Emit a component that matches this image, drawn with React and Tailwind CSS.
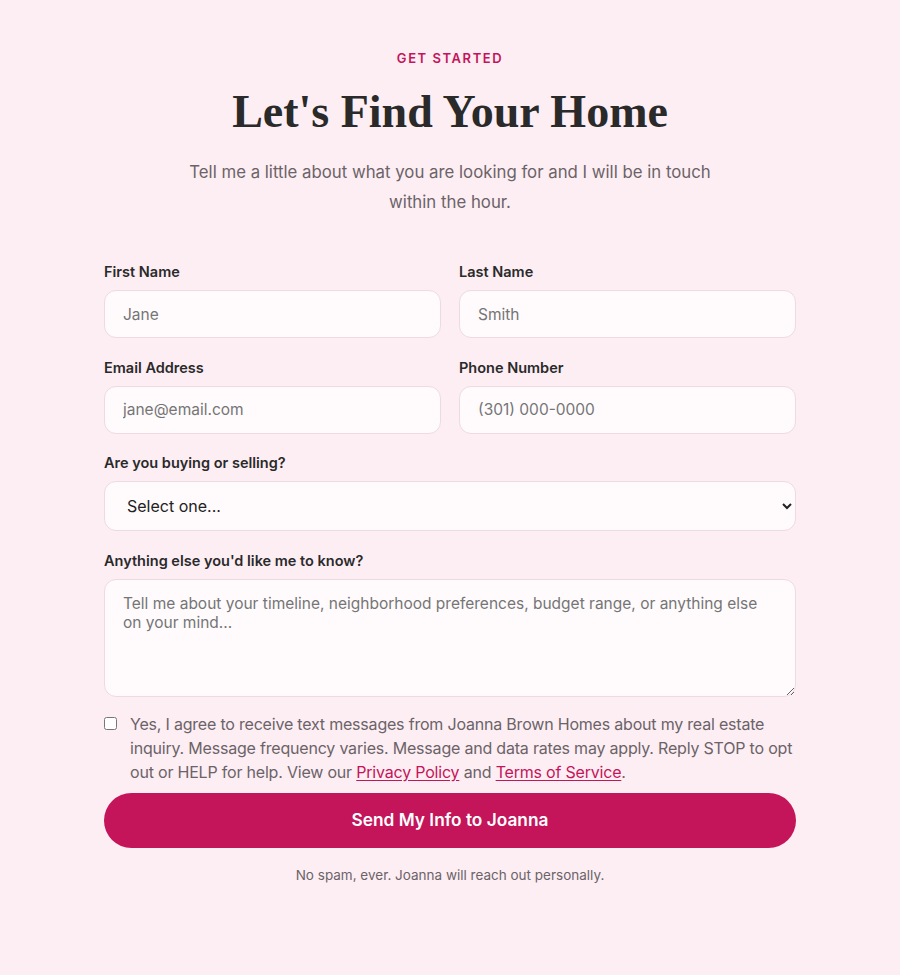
import { useState } from "react";

const inputClass =
  "w-full h-12 px-[18px] rounded-xl border-[1.5px] border-[#eedadf] bg-[#fffbfd] text-[15.5px] text-[#2a2a2a] placeholder:text-[#757575] focus:outline-none focus:border-[#c4145a]";

const Field = ({ label, children }) => (
  <div className="flex flex-col">
    <label className="text-[14.5px] font-semibold text-[#2a2a2a] mb-2 leading-5">{label}</label>
    {children}
  </div>
);

const App = () => {
  const [agree, setAgree] = useState(false);

  return (
    <div
      className="min-h-screen bg-[#fdeef4] pt-12 pb-20"
      style={{ fontFamily: "Inter, 'Noto Sans', sans-serif" }}
    >
      <div className="w-[692px] mx-auto">
        {/* Header */}
        <div className="text-center">
          <p className="text-[13px] font-semibold tracking-[0.12em] text-[#c4145a] leading-5">
            GET STARTED
          </p>
          <h1
            className="mt-[14px] text-[46px] font-bold text-[#2a2a2a] leading-[60px]"
            style={{ fontFamily: "'Liberation Serif', 'DejaVu Serif', serif" }}
          >
            Let's Find Your Home
          </h1>
          <p className="mt-[15px] mx-auto max-w-[540px] text-[16.8px] leading-[30px] text-[#6b6367]">
            Tell me a little about what you are looking for and I will be in touch within the hour.
          </p>
        </div>

        {/* Form */}
        <form className="mt-[45px] flex flex-col gap-[19.5px]" onSubmit={(e) => e.preventDefault()}>
          <div className="grid grid-cols-2 gap-[18px]">
            <Field label="First Name">
              <input type="text" placeholder="Jane" className={inputClass} />
            </Field>
            <Field label="Last Name">
              <input type="text" placeholder="Smith" className={inputClass} />
            </Field>
          </div>
          <div className="grid grid-cols-2 gap-[18px]">
            <Field label="Email Address">
              <input type="email" placeholder="jane@email.com" className={inputClass} />
            </Field>
            <Field label="Phone Number">
              <input type="tel" placeholder="(301) 000-0000" className={inputClass} />
            </Field>
          </div>
          <Field label="Are you buying or selling?">
            <select
              defaultValue=""
              className="w-full h-[50px] pl-[18px] pr-3 rounded-xl border-[1.5px] border-[#eedadf] bg-[#fffbfd] text-base text-[#222] focus:outline-none"
            >
              <option value="" disabled>
                Select one...
              </option>
              <option value="buying">Buying</option>
              <option value="selling">Selling</option>
              <option value="both">Both</option>
            </select>
          </Field>
          <Field label="Anything else you'd like me to know?">
            <textarea
              placeholder="Tell me about your timeline, neighborhood preferences, budget range, or anything else on your mind..."
              className="w-full h-[118px] px-[18px] py-[14px] rounded-xl border-[1.5px] border-[#eedadf] bg-[#fffbfd] text-[15.5px] leading-[19px] text-[#2a2a2a] placeholder:text-[#757575] focus:outline-none"
            />
          </Field>

          <label className="flex items-start gap-[13px] -mt-1">
            <input
              type="checkbox"
              checked={agree}
              onChange={(e) => setAgree(e.target.checked)}
              className="mt-[5px] w-[13px] h-[13px] shrink-0"
            />
            <span className="text-base leading-6 tracking-[-0.2px] text-[#6b6367]">
              Yes, I agree to receive text messages from Joanna Brown Homes about my real estate
              inquiry. Message frequency varies. Message and data rates may apply. Reply STOP to opt
              out or HELP for help. View our{" "}
              <a href="#" className="text-[#c4145a] underline underline-offset-2">
                Privacy Policy
              </a>{" "}
              and{" "}
              <a href="#" className="text-[#c4145a] underline underline-offset-2">
                Terms of Service
              </a>
              .
            </span>
          </label>

          <button
            type="submit"
            className="-mt-[11px] w-full h-[55px] rounded-full bg-[#c4145a] text-white text-[17.3px] font-semibold hover:bg-[#a90f4c] transition-colors"
          >
            Send My Info to Joanna
          </button>
          <p className="-mt-[2px] text-center text-[13.5px] leading-5 text-[#6b6367]">
            No spam, ever. Joanna will reach out personally.
          </p>
        </form>
      </div>
    </div>
  );
};

export default App;
